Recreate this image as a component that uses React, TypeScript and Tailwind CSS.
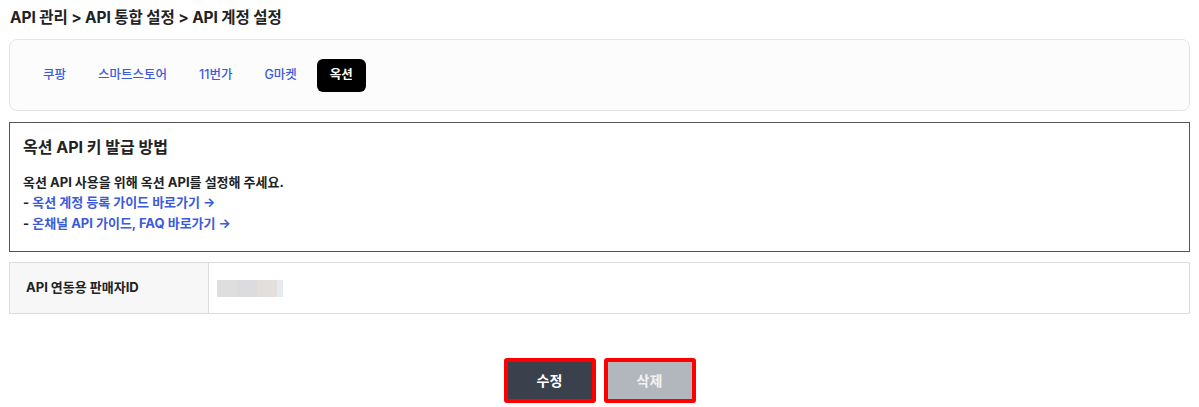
import React from "react";

const FONT = "font-['Inter','Noto_Sans_CJK_KR',sans-serif]";

const TABS = ["쿠팡", "스마트스토어", "11번가", "G마켓", "옥션"];

export default function App() {
  const active = "옥션";

  return (
    <div className={`${FONT} min-h-[407px] bg-white px-[9px] pb-[4px] pt-[7px] text-[#222]`}>
      {/* breadcrumb */}
      <h1 className="pl-[1px] text-[15.5px] font-bold leading-[22px] tracking-[-0.1px]">
        API 관리 &gt; API 통합 설정 &gt; API 계정 설정
      </h1>

      {/* market tabs */}
      <div className="mt-[10px] flex h-[72px] items-center gap-[8px] rounded-[8px] border border-[#e4e4e4] bg-[#fcfcfc] px-[21px]">
        {TABS.map((t) => (
          <button
            key={t}
            className={`h-[33px] rounded-[6px] px-[12px] text-[12.5px] leading-none ${
              t === active ? "bg-black px-[13px] font-bold text-white" : "font-medium text-[#3b5bdb]"
            }`}
          >
            {t}
          </button>
        ))}
      </div>

      {/* guide */}
      <div className="mt-[11px] h-[130px] border border-[#555] px-[13px] pt-[12px]">
        <h2 className="text-[16px] font-bold leading-[24px]">옥션 API 키 발급 방법</h2>
        <div className="mt-[13px] text-[13px] font-bold leading-[20px]">
          <p>옥션 API 사용을 위해 옥션 API를 설정해 주세요.</p>
          <p>
            - <a className="text-[#3b5bdb]">옥션 계정 등록 가이드 바로가기 →</a>
          </p>
          <p className="mt-[1px]">
            - <a className="text-[#3b5bdb]">온채널 API 가이드, FAQ 바로가기 →</a>
          </p>
        </div>
      </div>

      {/* seller id row */}
      <div className="mt-[10px] flex h-[52px] border-y border-[#dcdcdc]">
        <div className="flex w-[200px] items-center border-x border-[#dcdcdc] bg-[#f7f7f7] pl-[16px] text-[13px] font-bold">
          API 연동용 판매자ID
        </div>
        <div className="flex flex-1 items-center border-r border-[#dcdcdc] pl-[8px]">
          <div className="flex h-[17px] w-[66px]">
            <div className="w-[20px] bg-[#dedede]" />
            <div className="w-[20px] bg-[#dcdcde]" />
            <div className="w-[20px] bg-[#e2dfdd]" />
            <div className="w-[6px] bg-[#e6e9ee]" />
          </div>
        </div>
      </div>

      {/* actions */}
      <div className="mt-[44px] flex justify-center gap-[8px]">
        <button className="h-[45px] w-[92px] rounded-[3px] border-4 border-[#ff0000] bg-[#3b404d] text-[14px] font-bold text-white">
          수정
        </button>
        <button className="h-[45px] w-[92px] rounded-[3px] border-4 border-[#ff0000] bg-[#b2b6bd] text-[14px] font-bold text-[#f2f2f2]">
          삭제
        </button>
      </div>
    </div>
  );
}
